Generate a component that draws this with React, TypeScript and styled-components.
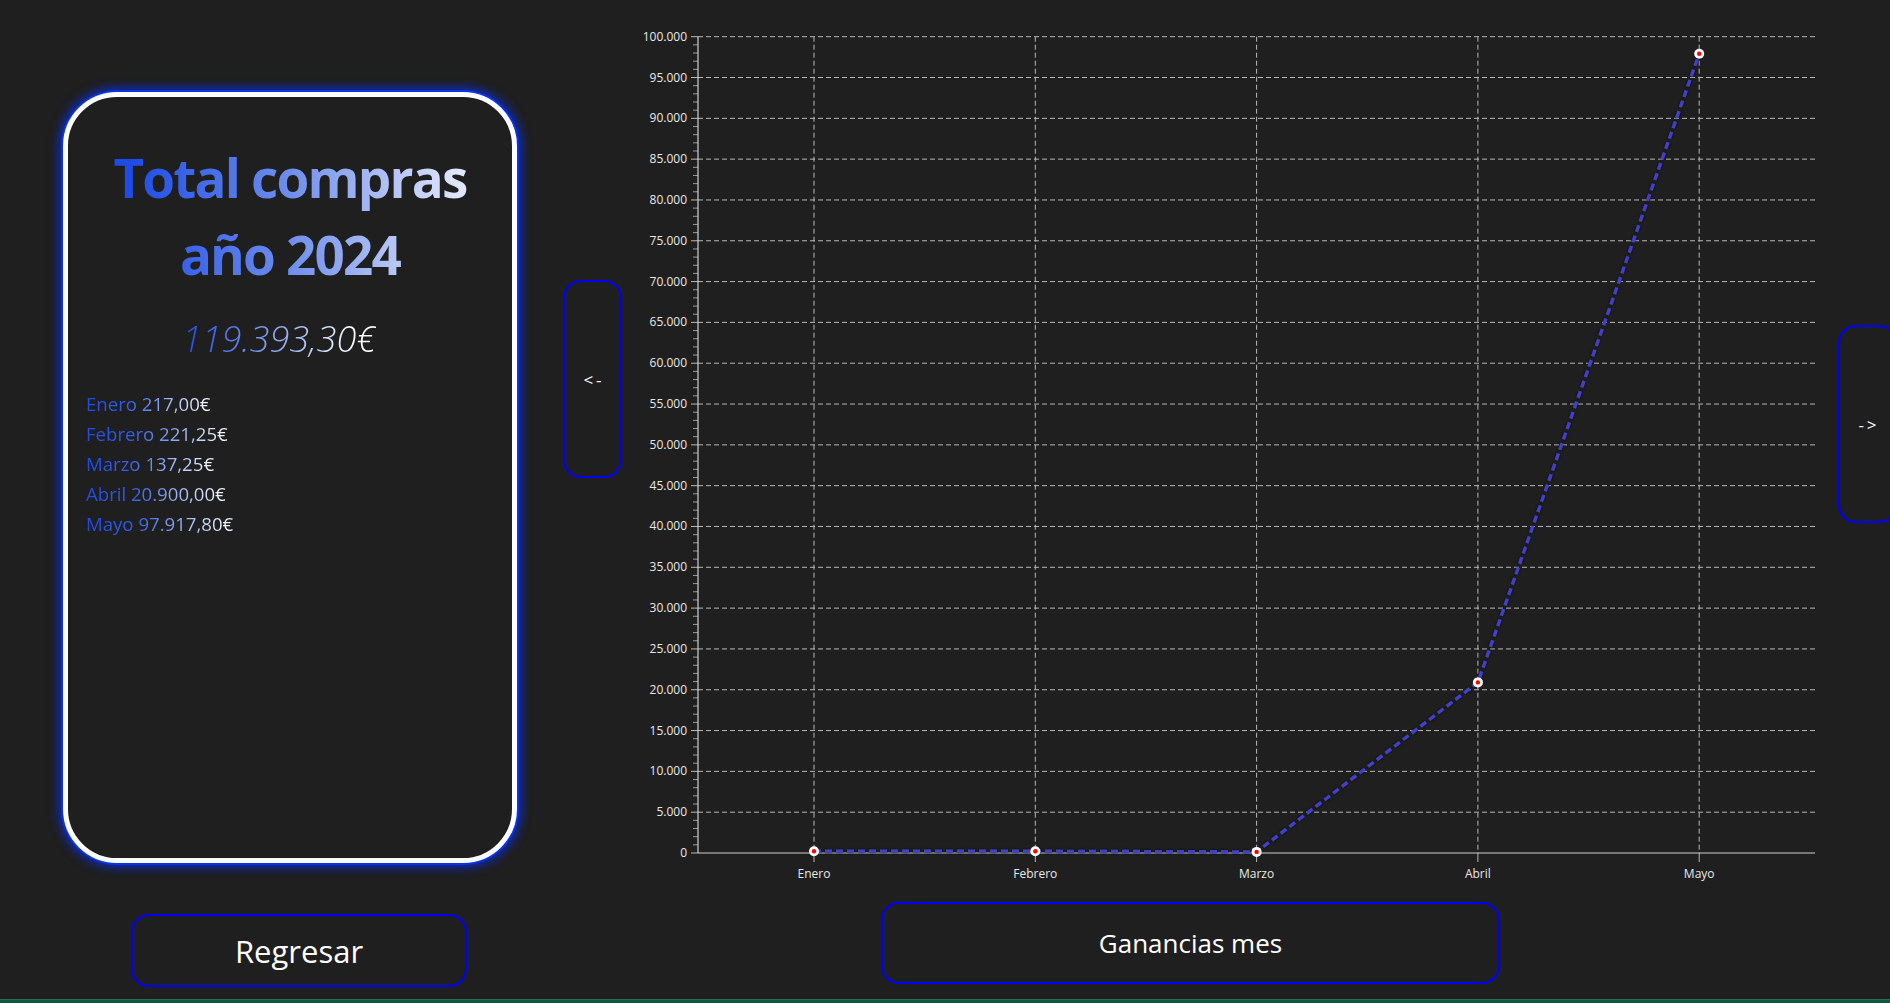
import React from "react";
import styled, { createGlobalStyle } from "styled-components";

const GlobalStyle = createGlobalStyle`
  html, body {
    margin: 0;
    padding: 0;
    background: #1f1f1f;
    overflow: hidden;
    font-family: "Open Sans", "Noto Sans", sans-serif;
  }
  * { box-sizing: border-box; }
`;

const Page = styled.div`
  width: 1890px;
  height: 1003px;
  display: flex;
  flex-direction: column;
  overflow: hidden;
  background: #1f1f1f;
`;

const MainRow = styled.div`
  flex: 1;
  display: flex;
  align-items: flex-start;
  padding-left: 63px;
`;

const BottomStrip = styled.div`
  height: 4px;
  flex-shrink: 0;
  background: #0b5a41;
  border-top: 1px solid #2a6b55;
`;

const LeftColumn = styled.div`
  width: 454px;
  flex-shrink: 0;
  margin-top: 92px;
  display: flex;
  flex-direction: column;
`;

const Card = styled.div`
  height: 771px;
  border: 5px solid #ffffff;
  border-radius: 54px;
  background: #1f1f1f;
  box-shadow: 0 0 0 2px #0a34e8, 0 0 10px 5px rgba(10, 45, 230, 0.75);
  padding: 42px 0 0 18px;
  display: flex;
  flex-direction: column;
`;

const Title = styled.h1`
  margin: 0 18px 0 0;
  text-align: center;
  font-size: 53px;
  font-weight: 700;
  line-height: 77px;
  letter-spacing: -1.8px;
  background: linear-gradient(90deg, #1c4be6 10%, #6f8eec 50%, #e2e8fc 92%);
  -webkit-background-clip: text;
  background-clip: text;
  color: transparent;
`;

const Amount = styled.div`
  margin: 22px auto 0;
  width: fit-content;
  position: relative;
  left: -20px;
  font-size: 36px;
  font-style: italic;
  font-weight: 300;
  line-height: 48px;
  background: linear-gradient(90deg, #1c4be6 0%, #8ea6f0 50%, #ffffff 90%);
  -webkit-background-clip: text;
  background-clip: text;
  color: transparent;
`;

const MonthList = styled.div`
  margin-top: 26px;
  display: flex;
  flex-direction: column;
`;

const MonthLine = styled.div`
  width: fit-content;
  font-size: 18.6px;
  line-height: 30px;
  background: linear-gradient(90deg, #1f4ae6 0%, #3560ea 35%, #9ab0f2 65%, #ffffff 100%);
  -webkit-background-clip: text;
  background-clip: text;
  color: transparent;
`;

const OutlineButton = styled.button<{ $w: number; $h: number; $size: number }>`
  width: ${(p) => p.$w}px;
  height: ${(p) => p.$h}px;
  flex-shrink: 0;
  border: 2px solid #0000ff;
  border-radius: 18px;
  background: transparent;
  color: #ffffff;
  font-family: "Open Sans", "Noto Sans", sans-serif;
  font-size: ${(p) => p.$size}px;
  display: flex;
  align-items: center;
  justify-content: center;
  padding: 0;
  cursor: pointer;
`;

const RegresarButton = styled(OutlineButton)`
  margin: 51px 0 0 68px;
`;

const ArrowButton = styled(OutlineButton)<{ $top: number; $left: number }>`
  margin-top: ${(p) => p.$top}px;
  margin-left: ${(p) => p.$left}px;
  letter-spacing: 3px;
  padding-left: 3px;
`;

const ChartColumn = styled.div`
  width: 1200px;
  flex-shrink: 0;
  margin-left: 8px;
  display: flex;
  flex-direction: column;
`;

const ChartSvg = styled.svg`
  display: block;
  width: 1200px;
  height: 895px;
`;

const GananciasButton = styled(OutlineButton)`
  margin: 7px 0 0 251px;
`;

const months = [
  { name: "Enero", value: 217.0, label: "217,00€" },
  { name: "Febrero", value: 221.25, label: "221,25€" },
  { name: "Marzo", value: 137.25, label: "137,25€" },
  { name: "Abril", value: 20900.0, label: "20.900,00€" },
  { name: "Mayo", value: 97917.8, label: "97.917,80€" },
];

const AX = 68;
const TOP = 36.7;
const BOT = 853;
const RIGHT = 1185;
const yOf = (v: number) => BOT - (v / 100000) * (BOT - TOP);
const xOf = (i: number) => 184 + i * 221.3;

const fmt = (n: number) =>
  n === 0 ? "0" : `${Math.floor(n / 1000)}.000`;

function Chart() {
  const majors: number[] = [];
  for (let v = 0; v <= 100000; v += 5000) majors.push(v);
  const minors: number[] = [];
  for (let v = 1000; v < 100000; v += 1000) if (v % 5000 !== 0) minors.push(v);
  const pts = months.map((m, i) => [xOf(i), yOf(m.value)]);
  const d = pts.map((p, i) => `${i === 0 ? "M" : "L"}${p[0]},${p[1]}`).join(" ");
  return (
    <ChartSvg viewBox="0 0 1200 895">
      <defs>
        <filter id="lineShadow" x="-5%" y="-5%" width="110%" height="110%">
          <feDropShadow dx="0" dy="0" stdDeviation="1.5" floodColor="#000" floodOpacity="0.8" />
        </filter>
      </defs>
      {majors.map((v) => (
        <g key={`maj${v}`}>
          {v > 0 && (
            <line x1={AX} x2={RIGHT} y1={yOf(v)} y2={yOf(v)} stroke="#b8b8b8" strokeWidth={1} strokeDasharray="5 3" />
          )}
          <line x1={AX - 7} x2={AX} y1={yOf(v)} y2={yOf(v)} stroke="#b8b8b8" strokeWidth={1} />
          <text x={AX - 11} y={yOf(v) + 4} textAnchor="end" fontSize={12} fill="#e8e8e8" fontFamily="Open Sans, sans-serif">
            {fmt(v)}
          </text>
        </g>
      ))}
      {minors.map((v) => (
        <line key={`min${v}`} x1={AX - 5} x2={AX} y1={yOf(v)} y2={yOf(v)} stroke="#9a9a9a" strokeWidth={1} />
      ))}
      {months.map((m, i) => (
        <g key={m.name}>
          <line x1={xOf(i)} x2={xOf(i)} y1={TOP} y2={BOT} stroke="#b8b8b8" strokeWidth={1} strokeDasharray="5 3" />
          <line x1={xOf(i)} x2={xOf(i)} y1={BOT} y2={BOT + 9} stroke="#b8b8b8" strokeWidth={1} />
          <text x={xOf(i)} y={BOT + 25} textAnchor="middle" fontSize={12} fill="#e8e8e8" fontFamily="Open Sans, sans-serif">
            {m.name}
          </text>
        </g>
      ))}
      <line x1={AX} x2={AX} y1={TOP} y2={BOT} stroke="#cfcfcf" strokeWidth={1.2} />
      <line x1={AX} x2={RIGHT} y1={BOT} y2={BOT} stroke="#cfcfcf" strokeWidth={1.2} />
      <path d={d} fill="none" stroke="#4141c8" strokeWidth={3.3} strokeDasharray="7 4" filter="url(#lineShadow)" />
      {pts.map((p, i) => (
        <g key={`pt${i}`}>
          <circle cx={p[0]} cy={p[1]} r={5} fill="#ffffff" />
          <circle cx={p[0]} cy={p[1]} r={2.2} fill="#ff0000" />
        </g>
      ))}
    </ChartSvg>
  );
}

export default function App() {
  return (
    <>
      <GlobalStyle />
      <Page>
        <MainRow>
          <LeftColumn>
            <Card>
              <Title>Total compras año 2024</Title>
              <Amount>119.393,30€</Amount>
              <MonthList>
                {months.map((m) => (
                  <MonthLine key={m.name}>
                    {m.name} {m.label}
                  </MonthLine>
                ))}
              </MonthList>
            </Card>
            <RegresarButton $w={336} $h={73} $size={31}>
              Regresar
            </RegresarButton>
          </LeftColumn>
          <ArrowButton $w={59} $h={198} $size={17} $top={280} $left={46}>
            {"<-"}
          </ArrowButton>
          <ChartColumn>
            <Chart />
            <GananciasButton $w={619} $h={82} $size={26}>
              Ganancias mes
            </GananciasButton>
          </ChartColumn>
          <ArrowButton $w={59} $h={198} $size={17} $top={325} $left={8}>
            {"->"}
          </ArrowButton>
        </MainRow>
        <BottomStrip />
      </Page>
    </>
  );
}
